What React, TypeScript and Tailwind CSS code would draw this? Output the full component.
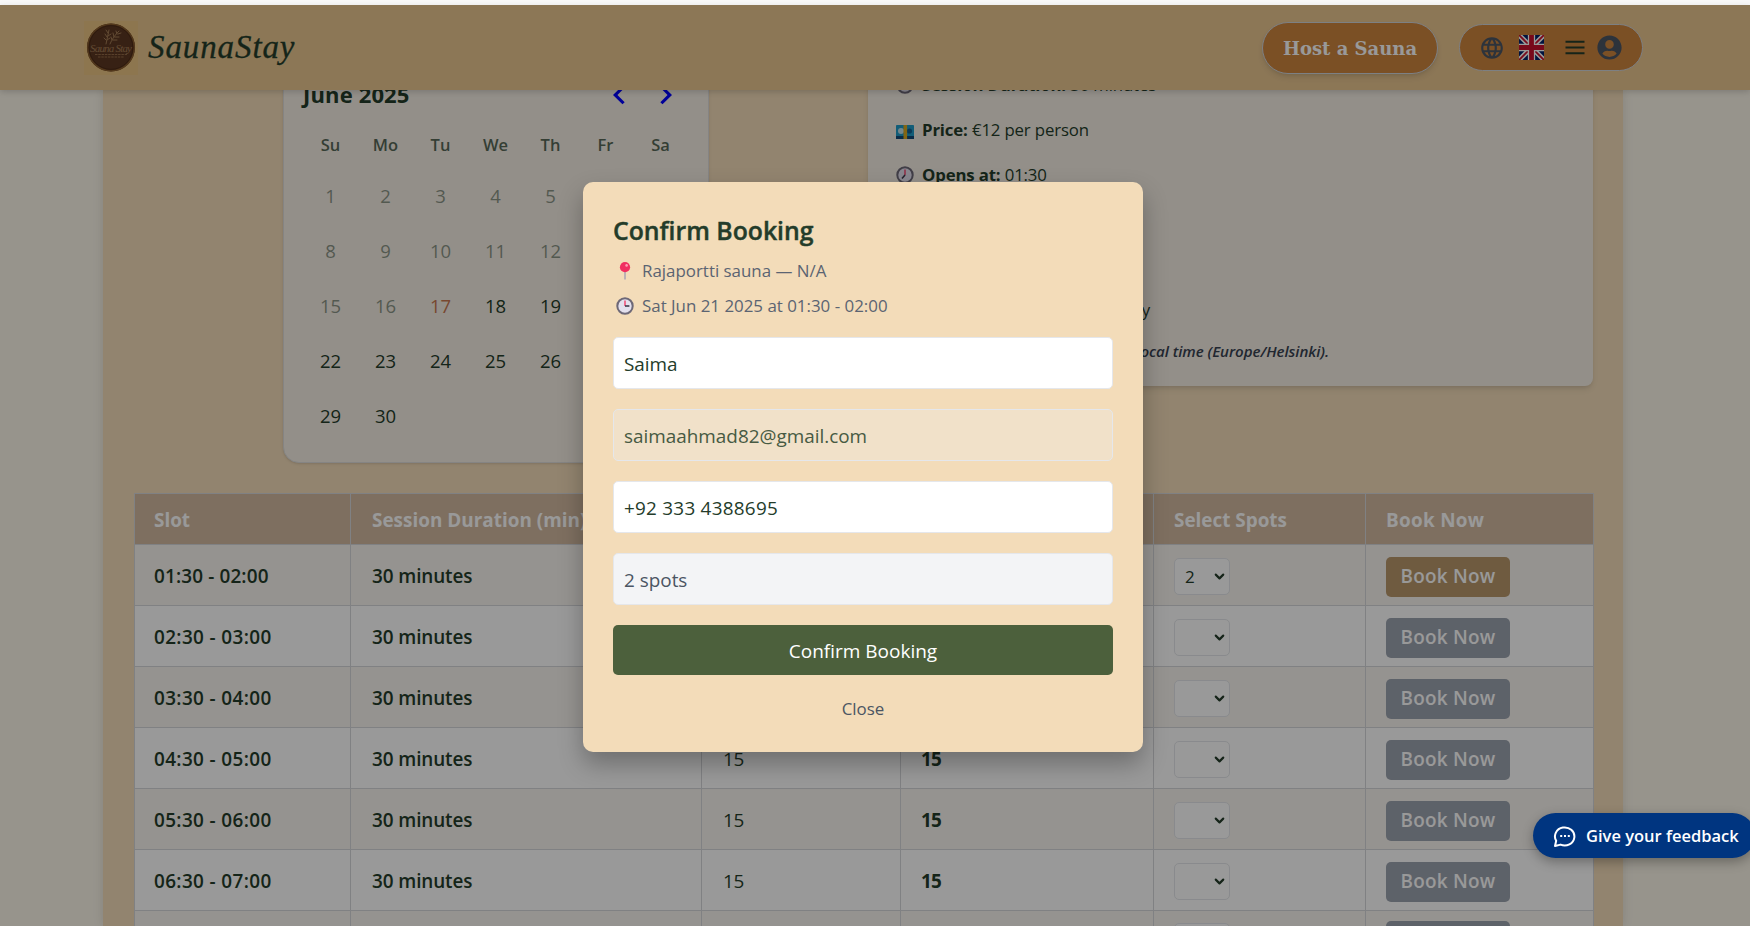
import React from "react";
import { MdLanguage } from "react-icons/md";
import { FaUserCircle } from "react-icons/fa";
import { ChevronDown, MessageCircleMore } from "lucide-react";

const slots = [
  "01:30 - 02:00",
  "02:30 - 03:00",
  "03:30 - 04:00",
  "04:30 - 05:00",
  "05:30 - 06:00",
  "06:30 - 07:00",
  "",
];
const weekdays = ["Su", "Mo", "Tu", "We", "Th", "Fr", "Sa"];
const days = Array.from({ length: 30 }, (_, i) => i + 1);
const columns =
  "grid grid-cols-[216px_351px_199px_253px_212px_227px] divide-x divide-[#d5d7db]";

function Logo() {
  return (
    <svg className="size-[54px]" viewBox="0 0 54 54">
      <rect width="54" height="54" fill="#ebc584" />
      <circle cx="27" cy="26.5" r="24" fill="#5d3822" />
      <circle cx="27" cy="26.5" r="23.3" fill="none" stroke="#8c602f" strokeWidth="1.2" />
      <circle cx="27" cy="26.5" r="21.8" fill="none" stroke="#43240f" strokeWidth="0.6" />
      <g stroke="#a37c55" strokeWidth="1" fill="none" strokeLinecap="round">
        <path d="M22 23c1-5 2-9 3-14M26 23c2-5 5-9 9-13M22 19l-2-2M23 16l-2-3M24 12l-2-3M23 19l3-2M24 15l3-2M28 19l-1-3M30 16l-1-4M33 13l-1-3M29 19l4 0M31 16l4 0M34 13l3-1" />
      </g>
      <text x="27" y="30.5" textAnchor="middle" textLength="42" fontSize="11" fontStyle="italic" fontFamily="Liberation Serif, serif" fill="#a37c55">
        Sauna Stay
      </text>
      <path d="M11 33.5h32M14 36h26" stroke="#946c48" strokeWidth="1.1" strokeDasharray="2.5 0.8" />
    </svg>
  );
}

function Flag() {
  return (
    <svg className="size-[25px]" viewBox="0 0 24 24">
      <rect width="24" height="24" fill="#012169" />
      <path d="M0 0l24 24M24 0L0 24" stroke="#fff" strokeWidth="4.6" />
      <path d="M0 0l24 24M24 0L0 24" stroke="#c8102e" strokeWidth="1.8" />
      <path d="M12 0v24M0 12h24" stroke="#fff" strokeWidth="7" />
      <path d="M12 0v24M0 12h24" stroke="#c8102e" strokeWidth="4.6" />
    </svg>
  );
}

function Clock({ hand, className }: { hand: string; className: string }) {
  return (
    <svg className={className} viewBox="0 0 18 18">
      <circle cx="9" cy="9" r="7.7" fill="#e3e0ee" stroke="#6d6877" strokeWidth="2" />
      <path d="M9 9V3.6" stroke="#f0527a" strokeWidth="1.6" />
      <path d={hand} stroke="#3f3a4c" strokeWidth="1.6" fill="none" />
    </svg>
  );
}

function Pin() {
  return (
    <svg className="h-[18px] w-[18px]" viewBox="0 0 18 18">
      <path d="M9 9v8.5" stroke="#a9a3b3" strokeWidth="1.5" />
      <circle cx="9" cy="5.2" r="5.1" fill="#f02f60" />
      <circle cx="10.6" cy="3.4" r="1.3" fill="#ff9db4" />
    </svg>
  );
}

function Banknote() {
  return (
    <svg className="mt-1 h-[14px] w-[18px]" viewBox="0 0 18 14">
      <rect width="18" height="14" rx="0.8" fill="#1e9cc9" />
      <rect y="11" width="18" height="3" fill="#114a78" />
      <circle cx="5" cy="6" r="3" fill="#bfe0ea" />
      <circle cx="13.5" cy="6" r="2.6" fill="#13608f" />
      <rect x="7.5" width="3.6" height="14" fill="#d9a821" />
    </svg>
  );
}

function Chevron({ flip = false }: { flip?: boolean }) {
  return (
    <svg className={flip ? "size-7 -scale-x-100" : "size-7"} viewBox="0 0 24 24">
      <polygon fill="#0000ff" points="16 18.112 9.81 12 16 5.87 14.114 4 6 12 14.114 20" />
    </svg>
  );
}

function Header() {
  return (
    <header className="relative z-10 flex h-[85px] shrink-0 items-center bg-[#e9c690] pr-[107px] pl-[84px] shadow-[0_2px_6px_rgba(0,0,0,0.16)]">
      <Logo />
      <span className="ml-[10px] font-['Liberation_Serif',serif] text-[33px] leading-none tracking-[0.9px] italic [-webkit-text-stroke:0.3px_#243c2a]">
        SaunaStay
      </span>
      <div className="ml-auto flex items-center gap-[21px]">
        <button className="flex h-[52px] w-[176px] items-center justify-center rounded-full border border-[#d1d5db] bg-[#cd853f] pt-px font-['DejaVu_Serif',serif] text-[18px] font-bold whitespace-nowrap text-white shadow-md">
          Host a Sauna
        </button>
        <div className="flex h-[47px] w-[184px] items-center rounded-full border border-[#d1d5db] bg-[#cd853f] pl-[19px]">
          <MdLanguage className="size-[26px] text-[#4b5563]" />
          <span className="ml-[14px]">
            <Flag />
          </span>
          <svg className="ml-[21px] h-[15px] w-[20px]" viewBox="0 0 20 15">
            <path d="M0.5 1.8h19M0.5 7.5h19M0.5 13.2h19" stroke="#243c2a" strokeWidth="2.1" />
          </svg>
          <FaUserCircle className="ml-[12px] size-[25px] text-[#4b5563]" />
        </div>
      </div>
    </header>
  );
}

function Calendar() {
  return (
    <section className="-mt-5 flex h-[393px] w-[426px] flex-col rounded-[16px] border border-[#dedddb] bg-[#f5efe5] px-[19px] shadow-sm">
      <div className="flex h-[48px] shrink-0 items-center justify-between pr-[10px]">
        <h2 className="pb-px text-[22px] font-bold tracking-[0.15px]">June 2025</h2>
        <div className="flex gap-[17px]">
          <Chevron />
          <Chevron flip />
        </div>
      </div>
      <div className="grid h-[52px] w-[385px] shrink-0 grid-cols-7 items-center pt-px text-center text-[16.5px] font-semibold opacity-75">
        {weekdays.map((d) => (
          <span key={d}>{d}</span>
        ))}
      </div>
      <div className="-mt-[3px] grid w-[385px] auto-rows-[55px] grid-cols-7 text-center text-[18.5px] leading-[55px]">
        {days.map((d) => (
          <span key={d} className={d < 17 ? "opacity-50" : d === 17 ? "text-[#c87850]" : ""}>
            {d}
          </span>
        ))}
      </div>
    </section>
  );
}

function InfoRow({ icon, label, value }: { icon: React.ReactNode; label: string; value: string }) {
  return (
    <p className="flex h-[45px] items-center gap-2">
      {icon}
      <span className="font-medium">
        <b className="font-bold">{label}</b> {value}
      </span>
    </p>
  );
}

function Details() {
  return (
    <section className="-mt-[28px] flex h-[324px] w-[725px] flex-col rounded-lg bg-[#f5efe5] px-7 text-[16.8px] tracking-[-0.15px] shadow-md">
      <InfoRow icon={<Clock className="size-[18px]" hand="M9 9h4" />} label="Session Duration:" value="30 minutes" />
      <InfoRow icon={<Banknote />} label="Price:" value="€12 per person" />
      <InfoRow icon={<Clock className="size-[18px]" hand="M9 9l-3 3.5" />} label="Opens at:" value="01:30" />
      <p className="mt-[90px] flex h-[45px] w-[254px] items-center justify-end font-medium">Every day</p>
      <p className="flex h-[38px] w-[433px] items-center justify-end text-[15.1px] font-semibold tracking-[-0.05px] whitespace-nowrap text-[#374151] italic">
        All times are in local time (Europe/Helsinki).
      </p>
    </section>
  );
}

function SlotTable() {
  return (
    <section className="mt-[30px] ml-[31px] w-[1460px] border border-[#d5d7db] text-[18.9px] font-semibold">
      <div className={`${columns} h-[50px] items-stretch bg-[#d2b9a0] leading-[52px] font-bold text-white`}>
        <span className="pl-[19px]">Slot</span>
        <span className="pl-[21px] tracking-[0.02px] whitespace-nowrap">Session Duration (min)</span>
        <span className="pl-5">Capacity</span>
        <span className="pl-5">Available</span>
        <span className="pl-5">Select Spots</span>
        <span className="pl-5 tracking-[0.3px]">Book Now</span>
      </div>
      {slots.map((slot, i) => (
        <div
          key={i}
          className={`${columns} h-[61px] border-t border-[#d5d7db] leading-[63px] ${i % 2 ? "bg-white" : "bg-[#f9f5f0]"}`}
        >
          <span className={i === 0 ? "pl-[19px] tracking-[0.15px]" : "pl-[19px] tracking-[0.38px]"}>{slot}</span>
          <span className="pl-[21px] tracking-[-0.1px]">{slot && "30 minutes"}</span>
          <span className="pl-[21px] font-normal tracking-[-0.3px]">{slot && "15"}</span>
          <span className="pl-5 font-bold tracking-[-0.8px]">{slot && "15"}</span>
          <span className="flex items-center pl-5">
            <span className="flex h-[37px] w-[56px] items-center rounded-[5px] border border-[#e5e7eb] bg-white pl-[10px] text-[17px] leading-none font-normal">
              {i === 0 ? "2" : ""}
              <ChevronDown className="mr-[2px] ml-auto size-[15px]" strokeWidth={3.4} />
            </span>
          </span>
          <span className="flex items-center pl-5">
            <button
              className={`h-[40px] w-[124px] rounded-[5px] leading-none tracking-[0.25px] text-white ${i === 0 ? "bg-[#b9986c]" : "bg-[#9ca3af]"}`}
            >
              {slot && "Book Now"}
            </button>
          </span>
        </div>
      ))}
    </section>
  );
}

function Modal() {
  const field = "flex h-[52px] shrink-0 items-center rounded-[5px] border border-[#e5e7eb] pl-[10px] pt-[2px] text-[18.9px]";
  return (
    <div className="flex h-[570px] w-[560px] flex-col rounded-[10px] bg-[#f3dcb9] px-[30px] pt-[30px] shadow-[0_12px_24px_rgba(0,0,0,0.28)]">
      <h2 className="h-[38px] text-[24.8px] leading-[37px] font-semibold [-webkit-text-stroke:0.4px_#243c2a]">Confirm Booking</h2>
      <p className="mt-[3px] flex h-[35px] items-center gap-[8px] pl-[3px] text-[16.9px] text-[#5b6472]">
        <Pin />
        <span>Rajaportti sauna — N/A</span>
      </p>
      <p className="flex h-[35px] items-center gap-[8px] pl-[3px] text-[16.9px] text-[#5b6472]">
        <Clock className="size-[18px]" hand="M9 9h4.4" />
        <span>Sat Jun 21 2025 at 01:30 - 02:00</span>
      </p>
      <div className="mt-[14px] flex flex-col gap-[20px]">
        <div className={`${field} bg-white`}>Saima</div>
        <div className={`${field} bg-[#f1e1c9] text-[#475a43]`}>saimaahmad82@gmail.com</div>
        <div className={`${field} tracking-[0.25px] bg-white`}>+92 333 4388695</div>
        <div className={`${field} bg-[#f3f4f6] text-[#4b5563]`}>2 spots</div>
        <button className="h-[50px] rounded-[5px] bg-[#4c603c] pt-[2px] text-[19px] font-medium text-white">Confirm Booking</button>
      </div>
      <button className="mt-[14px] h-[40px] self-center text-[16.9px] text-[#4b5563]">Close</button>
    </div>
  );
}

export default function App() {
  return (
    <div className="relative flex h-[926px] w-[1750px] flex-col overflow-hidden bg-[#fcf7ea] font-['Open_Sans',sans-serif] text-[#243c2a]">
      <div className="h-[5px] shrink-0 bg-[#f8f8f8]" />
      <Header />
      <main className="ml-[103px] h-[836px] w-[1520px] bg-[#f3dcb9] shadow-[0_0_10px_rgba(0,0,0,0.12)]">
        <div className="flex h-[373px] items-start pl-[180px]">
          <Calendar />
          <div className="ml-[159px]">
            <Details />
          </div>
        </div>
        <SlotTable />
      </main>
      <div className="absolute inset-x-0 top-[5px] bottom-0 z-20 bg-black/40 pt-[177px] pl-[583px]">
        <Modal />
      </div>
      <button className="absolute top-[813px] left-[1533px] z-30 flex h-[45px] w-[222px] items-center gap-[9px] rounded-full bg-[#003580] pl-[20px] text-[16.5px] font-semibold whitespace-nowrap text-white shadow-[0_4px_12px_rgba(0,0,0,0.3)]">
        <svg className="size-[24px] shrink-0" viewBox="0 0 24 24" fill="none" stroke="currentColor" strokeWidth="2">
          <path d="M2 22l1.2-5.2A9.7 9 0 1 1 7.6 20.6L2 22z" strokeLinejoin="round" />
          <path d="M7.2 12h2M11 12h2M14.8 12h2" strokeWidth="2.2" />
        </svg>
        <span className="pt-px">Give your feedback</span>
      </button>
    </div>
  );
}
